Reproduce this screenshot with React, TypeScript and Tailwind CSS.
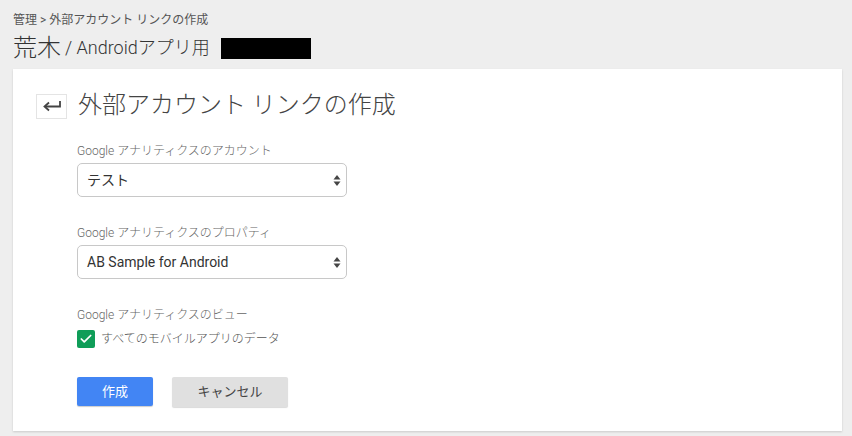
import { Check } from 'lucide-react';

const font = { fontFamily: 'Roboto, "Noto Sans CJK JP", sans-serif' };

const SelectBox = ({ value }: { value: string }) => (
  <div className="flex h-[34px] w-[270px] items-center justify-between rounded-[5px] border border-[#c8c8c8] bg-white pl-[9px] pr-[5px] text-[14px] text-[#333]">
    <span>{value}</span>
    <svg width="8" height="13" viewBox="0 0 8 13">
      <path d="M4 1 L7.5 5.5 H0.5 Z" fill="#444" />
      <path d="M4 12 L7.5 7.5 H0.5 Z" fill="#444" />
    </svg>
  </div>
);

const App = () => {
  return (
    <div className="min-h-[436px] bg-[#eeeeee] pt-[12px] pb-[6px]" style={font}>
      <div className="px-[13px]">
        <p className="text-[12px] leading-[16px] text-[#555]">管理 &gt; 外部アカウント リンクの作成</p>
        <div className="mt-[5px] flex h-[30px] items-center font-light text-[#333]">
          <span className="text-[24px] leading-[30px]">荒木</span>
          <span className="ml-[4px] text-[18px] leading-[30px]">/ Androidアプリ用</span>
          <span className="ml-[11px] h-[21px] w-[90px] bg-black" />
        </div>
      </div>

      <div className="ml-[13px] mr-[10px] mt-[6px] h-[362px] bg-white px-[23px] pt-[22px] shadow-[0_1px_2px_rgba(0,0,0,0.15)]">
        <div className="flex items-center">
          <button className="flex h-[25px] w-[31px] items-center justify-center border border-[#e4e4e4] bg-white">
            <svg width="20" height="12" viewBox="0 0 20 12" fill="none" stroke="#444" strokeWidth="1.8">
              <path d="M18 1 V6.5 H3" />
              <path d="M7 2.5 L2.5 6.5 L7 10.5" />
            </svg>
          </button>
          <h1 className="ml-[11px] -translate-y-px text-[24px] font-light leading-[30px] text-[#444]">外部アカウント リンクの作成</h1>
        </div>

        <div className="ml-[41px] mt-[22px]">
          <p className="text-[12px] font-light leading-[16px] text-[#666]">Google アナリティクスのアカウント</p>
          <div className="mt-[4px]">
            <SelectBox value="テスト" />
          </div>

          <p className="mt-[28px] text-[12px] font-light leading-[16px] text-[#666]">Google アナリティクスのプロパティ</p>
          <div className="mt-[4px]">
            <SelectBox value="AB Sample for Android" />
          </div>

          <p className="mt-[28px] text-[12px] font-light leading-[16px] text-[#666]">Google アナリティクスのビュー</p>
          <div className="mt-[7px] flex items-center">
            <span className="flex h-[18px] w-[18px] items-center justify-center rounded-[2px] bg-[#0f9d58]">
              <Check className="h-[14px] w-[14px] text-white" strokeWidth={3} />
            </span>
            <span className="ml-[6px] text-[12px] font-light text-[#555]">すべてのモバイルアプリのデータ</span>
          </div>

          <div className="mt-[29px] flex gap-[19px]">
            <button className="h-[29px] w-[76px] rounded-[2px] bg-[#4285f4] text-[13px] text-white shadow-[0_1px_1px_rgba(0,0,0,0.2)]">
              作成
            </button>
            <button className="h-[30px] w-[116px] rounded-[2px] bg-[#e0e0e0] text-[13px] text-[#444] shadow-[0_1px_1px_rgba(0,0,0,0.15)]">
              キャンセル
            </button>
          </div>
        </div>
      </div>
    </div>
  );
};

export default App;
